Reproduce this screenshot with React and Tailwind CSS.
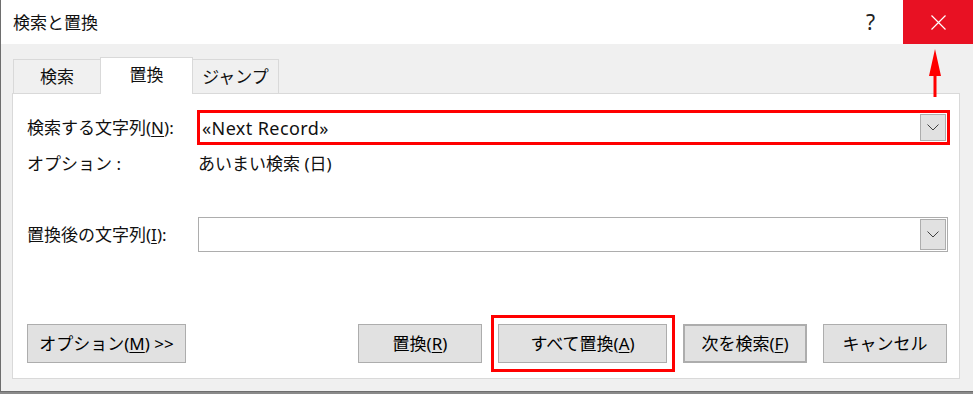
const ChevronDown = () => (
  <svg width="12" height="7" viewBox="0 0 12 7" fill="none" stroke="#404040" strokeWidth="1">
    <path d="M0.5 0.5l5.5 5.5 5.5-5.5" />
  </svg>
);

const DropButton = () => (
  <div className="m-[1px] ml-auto flex w-[26px] items-center justify-center self-stretch border border-[#adadad] bg-[#e1e1e1]">
    <ChevronDown />
  </div>
);

const Key = ({ children }) => <span className="underline underline-offset-2">{children}</span>;

const Button = ({ children, className = "" }) => (
  <button className={`flex h-[39px] items-center justify-center border border-[#adadad] bg-[#e1e1e1] text-[17px] text-black ${className}`}>
    {children}
  </button>
);

export default function App() {
  return (
    <div
      className="relative h-[394px] w-[973px] overflow-hidden bg-[#8a8a8a] text-[#111]"
      style={{ fontFamily: '"Noto Sans", "Noto Sans CJK JP", sans-serif' }}
    >
      <div className="flex h-[392px] flex-col border-b border-l border-[#6e6e6e] bg-[#f0f0f0]">
        {/* title bar */}
        <div className="flex h-[44px] shrink-0 items-center bg-white">
          <span className="pl-[12px] text-[17px] leading-none">検索と置換</span>
          <span className="ml-auto mr-[28px] text-[21px] leading-none text-[#222]">?</span>
          <div className="flex h-[44px] w-[70px] items-center justify-center bg-[#e81123]">
            <svg width="15" height="15" viewBox="0 0 15 15" stroke="white" strokeWidth="1.2">
              <path d="M0.5 0.5l14 14M14.5 0.5l-14 14" />
            </svg>
          </div>
        </div>

        {/* tabs */}
        <div className="ml-[12px] mt-[13px] flex h-[36px] items-end">
          <div className="flex h-[34px] w-[87px] items-center justify-center border-l border-t border-[#d9d9d9] bg-[#f0f0f0] text-[17px]">
            検索
          </div>
          <div className="relative z-10 -mb-px flex h-[37px] w-[93px] items-center justify-center border-l border-r border-t border-[#d9d9d9] bg-white pb-[2px] text-[17px]">
            置換
          </div>
          <div className="flex h-[34px] w-[86px] items-center justify-center border-r border-t border-[#d9d9d9] bg-[#f0f0f0] text-[17px]">
            ジャンプ
          </div>
        </div>

        {/* panel */}
        <div className="ml-[11px] flex h-[286px] w-[948px] flex-col border border-[#d9d9d9] bg-white pl-[14px] pr-[9px]">
          <div className="mt-[16px] flex h-[35px] items-center">
            <span className="w-[170px] text-[17px]">
              検索する文字列(<Key>N</Key>):
            </span>
            <div className="flex h-[35px] w-[753px] items-stretch border-[3px] border-[#ff0000] bg-white">
              <span className="self-center pl-[2px] text-[18px] leading-none tracking-[0.4px]">«Next Record»</span>
              <DropButton />
            </div>
          </div>

          <div className="mt-[7px] flex h-[24px] items-center text-[17px]">
            <span className="w-[171px]">オプション :</span>
            <span>あいまい検索 (日)</span>
          </div>

          <div className="mt-[41px] flex h-[35px] items-center">
            <span className="w-[171px] text-[17px]">
              置換後の文字列(<Key>I</Key>):
            </span>
            <div className="flex h-[35px] w-[750px] items-stretch border border-[#adadad] bg-white">
              <DropButton />
            </div>
          </div>

          <div className="mt-[63px] flex h-[57px] items-center">
            <Button className="w-[159px]">
              オプション(<Key>M</Key>) &gt;&gt;
            </Button>
            <Button className="ml-[172px] w-[124px]">
              置換(<Key>R</Key>)
            </Button>
            <div className="ml-[9px] flex h-[57px] w-[184px] items-center border-[3px] border-[#ff0000] pl-[4px]">
              <Button className="w-[169px]">
                すべて置換(<Key>A</Key>)
              </Button>
            </div>
            <Button className="ml-[8px] w-[124px] border-2 border-[#0078d7]">
              次を検索(<Key>F</Key>)
            </Button>
            <Button className="ml-[16px] w-[124px]">キャンセル</Button>
          </div>
        </div>
      </div>

      {/* annotation arrow */}
      <svg className="absolute left-[927px] top-[49px]" width="16" height="50" viewBox="0 0 16 50">
        <path d="M8 0L14 27H9.5V48H6.5V27H2Z" fill="#ff0000" />
      </svg>
    </div>
  );
}
